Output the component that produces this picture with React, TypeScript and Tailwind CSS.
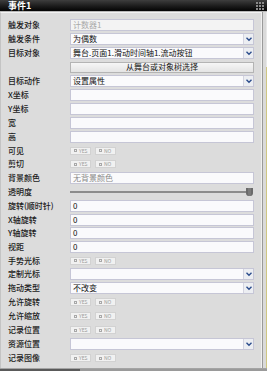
import React from "react"

type Kind = "input" | "select" | "toggle" | "button" | "slider"

type Field = {
    kind: Kind
    label?: string
    value?: string
    tone?: "disabled" | "hint"
    tight?: boolean
}

const fields: Field[] = [
    { kind: "input", label: "触发对象", value: "计数器1", tone: "disabled" },
    { kind: "select", label: "触发条件", value: "为偶数" },
    { kind: "select", label: "目标对象", value: "舞台.页面1.滑动时间轴1.流动按钮" },
    { kind: "button", value: "从舞台或对象树选择" },
    { kind: "select", label: "目标动作", value: "设置属性" },
    { kind: "input", label: "X坐标" },
    { kind: "input", label: "Y坐标" },
    { kind: "input", label: "宽" },
    { kind: "input", label: "高" },
    { kind: "toggle", label: "可见", tight: true },
    { kind: "toggle", label: "剪切" },
    { kind: "input", label: "背景颜色", value: "无背景颜色", tone: "hint" },
    { kind: "slider", label: "透明度" },
    { kind: "input", label: "旋转(顺时针)", value: "0" },
    { kind: "input", label: "X轴旋转", value: "0", tight: true },
    { kind: "input", label: "Y轴旋转", value: "0" },
    { kind: "input", label: "视距", value: "0" },
    { kind: "toggle", label: "手势光标", tight: true },
    { kind: "select", label: "定制光标" },
    { kind: "select", label: "拖动类型", value: "不改变" },
    { kind: "toggle", label: "允许旋转" },
    { kind: "toggle", label: "允许缩放" },
    { kind: "toggle", label: "记录位置" },
    { kind: "select", label: "资源位置" },
    { kind: "toggle", label: "记录图像" },
]

const Chevron = () => (
    <svg width="6" height="5" viewBox="0 0 6 5">
        <path d="M0.5 0.8 L3 3.3 L5.5 0.8" fill="none" stroke="#2b4c8c" strokeWidth="1.4" />
    </svg>
)

const Pill = ({ text }: { text: string }) => (
    <div className="flex items-center gap-[2px] h-[8px] w-[21px] pl-[3px] border border-[#d2d2d2] bg-[#f1f1f1]">
        <span className="w-[3px] h-[3px] border border-[#a8a8a8]" />
        <span className="text-[5px] leading-[6px] text-[#9a9a9a]">{text}</span>
    </div>
)

const Control = ({ f }: { f: Field }) => {
    if (f.kind === "toggle") {
        return (
            <div className="flex gap-[4px]">
                <Pill text="YES" />
                <Pill text="NO" />
            </div>
        )
    }
    if (f.kind === "slider") {
        return (
            <div className="flex items-center w-full pr-[1px]">
                <div className="flex-1 h-[2px] bg-[#8c8c8c]" />
                <div className="w-[7px] h-[8px] rounded-b-[3px] bg-[#7a7a7a] border-x-2 border-[#6a6a6a]" />
            </div>
        )
    }
    if (f.kind === "button") {
        return (
            <div className="w-full h-[11px] flex items-center justify-center border border-[#b4b4b4] bg-linear-to-b from-[#f6f6f6] to-[#e4e4e4] text-[8px] leading-[10px] text-[#1a1a1a]">
                {f.value}
            </div>
        )
    }
    const color =
        f.tone === "disabled" ? "text-[#a9a9a9] bg-[#f3f3f3]" : f.tone === "hint" ? "text-[#8a8a8a] bg-[#fafafc]" : "text-[#111] bg-[#fafafc]"
    return (
        <div className={`w-full h-[12px] flex items-center border border-[#c6c6d6] ${color}`}>
            <span className="flex-1 pl-[2px] text-[8px] leading-[10px] whitespace-nowrap">{f.value}</span>
            {f.kind === "select" && (
                <span className="w-[10px] h-full flex items-center justify-center border-l border-[#d4d4e0] bg-[#eceef2]">
                    <Chevron />
                </span>
            )}
        </div>
    )
}

export default function App() {
    return (
        <div className="w-[267px] h-[371px] overflow-hidden flex flex-col bg-[#dcdcdc] font-['Noto_Sans_CJK_SC','Liberation_Sans',sans-serif]">
            {/* title bar */}
            <div className="h-[11px] shrink-0 flex items-center justify-between pl-[8px] pr-[3px] bg-linear-to-b from-[#3e3e3e] to-[#050505]">
                <span className="text-[9px] leading-[10px] font-bold text-white">事件1</span>
                <div className="grid grid-cols-3 gap-[1px]">
                    {Array.from({ length: 9 }).map((_, i) => (
                        <span key={i} className="w-[2px] h-[2px] bg-[#8a8a8a]" />
                    ))}
                </div>
            </div>
            <div className="h-[1px] shrink-0 bg-[#b8b8b8]" />

            <div className="flex flex-1 min-h-0">
                {/* form */}
                <div className="w-[262px] flex flex-col pt-[5px] border-l border-[#c4c4c4] border-t border-t-[#f2f2f2] border-r border-r-[#f0f0f0]">
                    {fields.map((f, i) => (
                        <div key={i} className={`flex items-center ${f.tight ? "h-[13px]" : "h-[14px]"}`}>
                            <span className="w-[69px] shrink-0 pl-[7px] text-[8px] leading-[10px] font-medium text-[#1a1a1a] whitespace-nowrap">
                                {f.label}
                            </span>
                            <div className="w-[184px] flex items-center">
                                <Control f={f} />
                            </div>
                        </div>
                    ))}
                </div>
                {/* window edge */}
                <div className="w-[1px] bg-[#9a9a9a]" />
                <div className="flex-1 bg-[#dadada]" />
                <div className="w-[1px] flex flex-col">
                    <div className="h-[55px] bg-[#e8e8e8]" />
                    <div className="flex-1 bg-[#cfc682]" />
                </div>
            </div>
            <div className="h-[1px] shrink-0 bg-[#a4a4a4]" />
            <div className="h-[2px] shrink-0 flex">
                <div className="w-[80px] bg-[#5a5a5a]" />
                <div className="flex-1 bg-[#9a9a9a]" />
            </div>
        </div>
    )
}
